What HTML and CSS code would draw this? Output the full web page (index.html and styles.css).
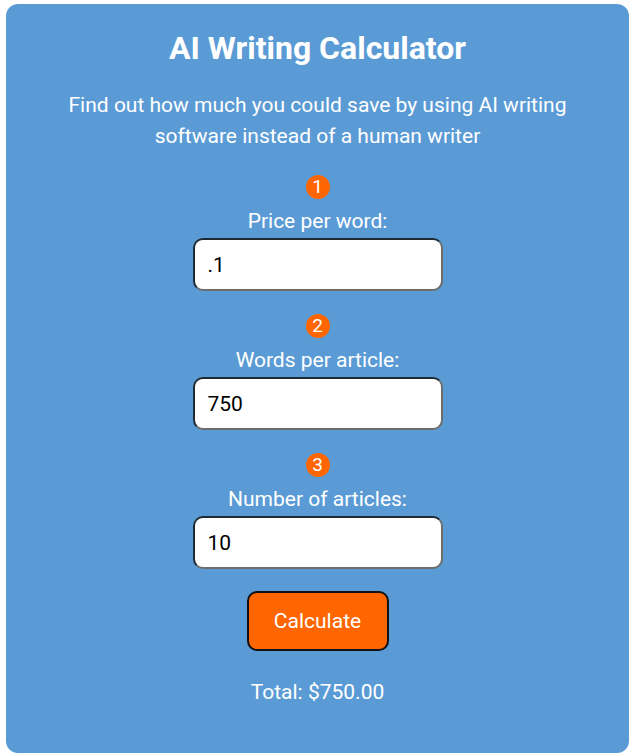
FILE: index.html
```html
<!DOCTYPE html>
<html>
<head>
<meta charset="utf-8">
<link rel="stylesheet" href="styles.css">
</head>
<body>
<div class="card">
  <h1 class="title">AI Writing Calculator</h1>
  <p class="intro">Find out how much you could save by using AI writing software instead of a human writer</p>
  <div class="field">
    <span class="badge">1</span>
    <label class="label" for="price">Price per word:</label>
    <input class="input" id="price" type="text" value=".1">
  </div>
  <div class="field">
    <span class="badge">2</span>
    <label class="label" for="words">Words per article:</label>
    <input class="input" id="words" type="text" value="750">
  </div>
  <div class="field">
    <span class="badge">3</span>
    <label class="label" for="count">Number of articles:</label>
    <input class="input" id="count" type="text" value="10">
  </div>
  <button class="btn" type="button">Calculate</button>
  <div class="total">Total: $750.00</div>
</div>
</body>
</html>
```
FILE: styles.css
```css
html, body {
  margin: 0;
  background: #ffffff;
}
body {
  padding: 4px 3px 3px 6px;
  font-family: Roboto, "Liberation Sans", sans-serif;
}
.card {
  background: #5b9bd5;
  border-radius: 12px;
  width: 623px;
  height: 749px;
  box-sizing: border-box;
  padding-top: 27px;
  display: flex;
  flex-direction: column;
  align-items: center;
  color: #ffffff;
}
.title {
  margin: 0;
  font-size: 32px;
  font-weight: 700;
  line-height: 34px;
}
.intro {
  margin: 25px 0 0;
  width: 560px;
  text-align: center;
  font-size: 21px;
  line-height: 31px;
}
.field {
  display: flex;
  flex-direction: column;
  align-items: center;
  margin-top: 23px;
}
.field:first-of-type {
  margin-top: 23px;
}
.badge {
  width: 24px;
  height: 24px;
  border-radius: 50%;
  background: #ff6600;
  color: #ffffff;
  font-size: 19px;
  line-height: 24px;
  text-align: center;
}
.label {
  margin-top: 9px;
  font-size: 21px;
  line-height: 26px;
}
.input {
  margin-top: 4px;
  width: 250px;
  height: 53px;
  box-sizing: border-box;
  border: 2px solid #1f2a33;
  border-bottom-color: #6d6d6d;
  border-right-color: #6d6d6d;
  border-radius: 10px;
  background: #ffffff;
  padding: 0 13px;
  font-family: Roboto, "Liberation Sans", sans-serif;
  font-size: 21px;
  color: #000000;
  outline: none;
}
.btn {
  margin-top: 22px;
  width: 142px;
  height: 60px;
  box-sizing: border-box;
  border: 2px solid #111111;
  border-radius: 10px;
  background: #ff6600;
  color: #ffffff;
  font-family: Roboto, "Liberation Sans", sans-serif;
  font-size: 21px;
}
.total {
  margin-top: 28px;
  font-size: 21px;
  line-height: 26px;
}
```
